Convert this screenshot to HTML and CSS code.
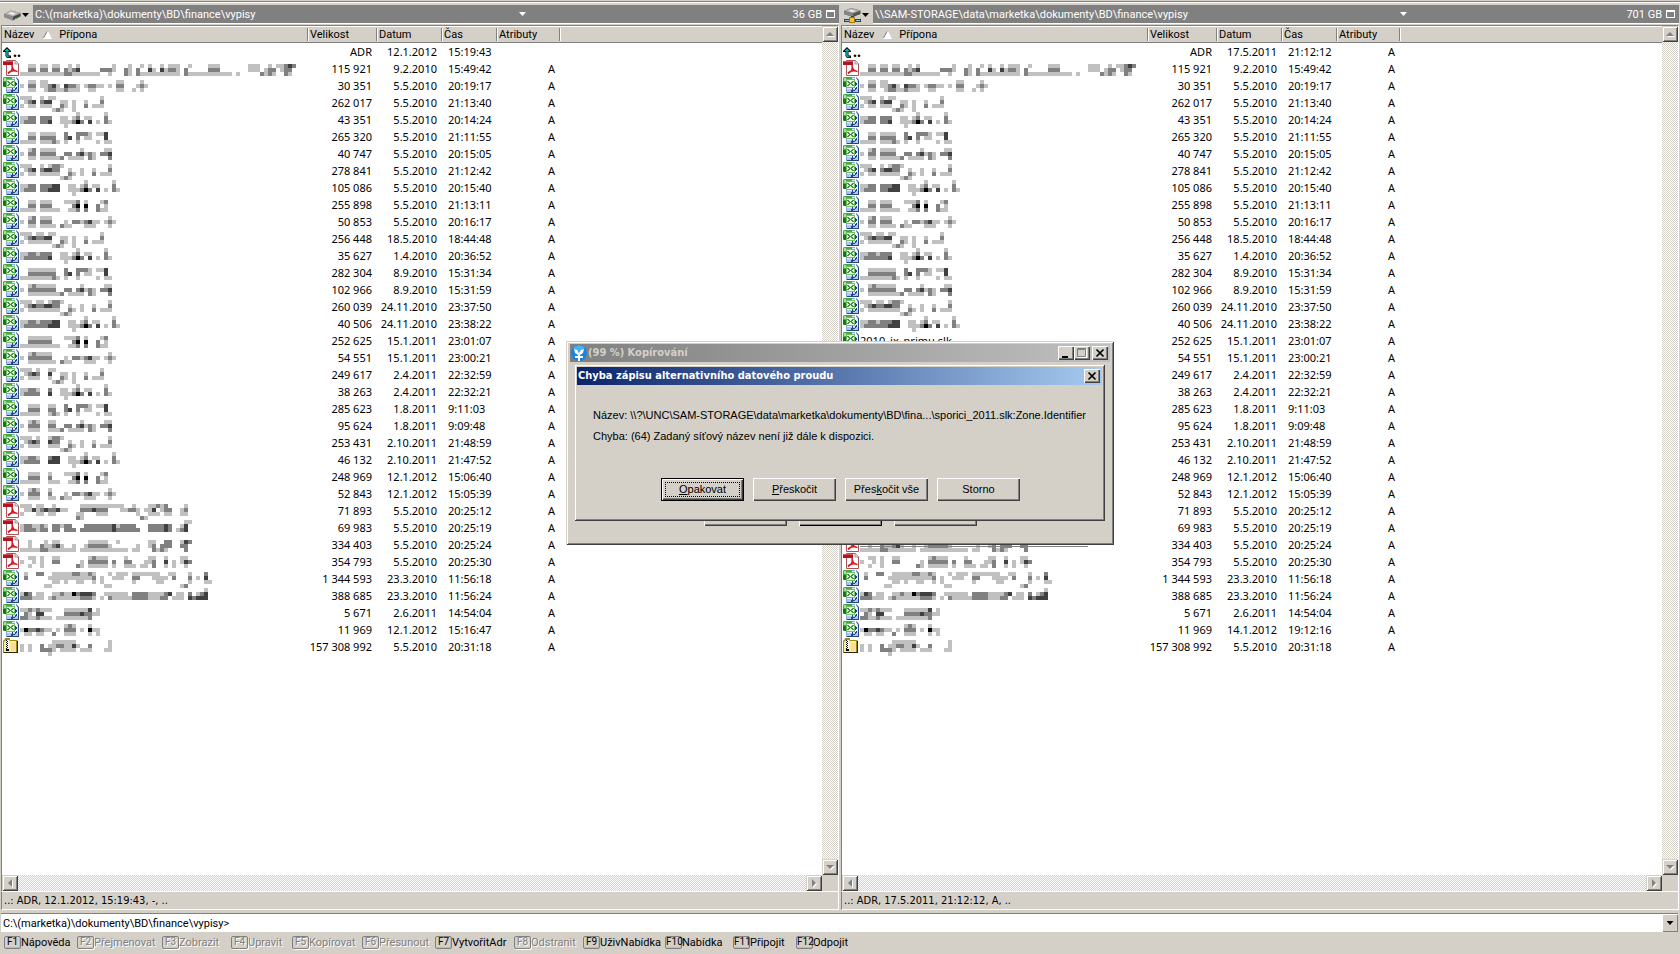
FILE: index.html
```html
<!DOCTYPE html>
<html lang="cs">
<head>
<meta charset="utf-8">
<title>C:\(marketka)\dokumenty\BD\finance\vypisy</title>
<link rel="stylesheet" href="styles.css">
</head>
<body>
<svg class="defs" aria-hidden="true">
  <symbol id="i-xls" viewBox="0 0 16 16">
    <path d="M3 0h10l3 3v13H3z" fill="#8aa8dc"/>
    <path d="M4 1h9l2 3v11H4z" fill="#dcebff"/>
    <path d="M4 12h11v3H4z" fill="#a9c8f5"/>
    <path d="M15 3h1v13H4v-1h11z" fill="#27467f"/>
    <path d="M12 0h1l3 3v1h-4z" fill="#fff"/><path d="M13 0l3 3v1h-1l-2-3z" fill="#3d5c98"/>
    <path d="M1 0h8v2H3v8H1L0 9V1z" fill="#3fae3f"/>
    <path d="M0 5h3v5H1L0 9z" fill="#0d7a12"/>
    <path d="M1 1h2v3H1z" fill="#a6e39a"/>
    <rect x="3" y="2" width="9" height="9" fill="#74bd66"/><rect x="4" y="3" width="7" height="7" fill="#effbe4"/>
    <path d="M4 4h2v1h1v1h1V5h1V4h2v1h-1v1H9v1h1v1h1v1H9V8H8V7H7v1H6v1H4V8h1V7h1V6H5V5H4z" fill="#3c9440"/>
    <path d="M12 5h1v1h1v2h-1v1h-1z" fill="#27467f"/>
    <path d="M13 10h1v2h-1v1h-1v-2h1zM8 13h4v1H9v1H8z" fill="#27467f"/><path d="M9 11h1v4H9z" fill="#27467f"/>
  </symbol>
  <symbol id="i-pdf" viewBox="0 0 16 16">
    <path d="M3.500.5h9l3 3v12h-12z" fill="#fff" stroke="#a8525a"/>
    <path d="M12 0v4h4" fill="#ddd" stroke="#888" stroke-width=".8"/>
    <path d="M0 1h10v4H0z" fill="#b5121d"/><path d="M0 1h10v1H0z" fill="#d9545a"/>
    <path d="M9 5c1 4-1 7-4 8.500M9.500 7c0 3 2 4 5 4.500M5 13c2-2.500 5-2.500 8-2" fill="none" stroke="#d4141e" stroke-width="1.500"/>
  </symbol>
  <symbol id="i-zip" viewBox="0 0 16 16">
    <path d="M0 3l2-2V0h5v2h7l1 1v11l-1 1H0z" fill="#9a8b14"/>
    <path d="M1 4l2-2h3l1 1h6v11H1z" fill="#f9f08c"/>
    <path d="M8 5h5v8H8z" fill="#fbd9a0"/><path d="M14 3h1v12H1v-1h13z" fill="#2c2804"/>
    <path d="M3 2h3v11H3z" fill="#fff"/><path d="M3 2h1v1h1v1H4v1h1v1H4v1h1v1H4v1h1v1H4v1h2v2H3v-3h1V9H3V8h1V7H3V6h1V5H3V4h1V3H3z" fill="#000"/>
  </symbol>
  <symbol id="i-up" viewBox="0 0 9 12">
    <path d="M0 5V4l4-4 4 4v1H5.500v3.500H8V11H4L2.500 9V5z" fill="#000"/>
    <path d="M1.500 4L4 1.500 6.500 4H4.700v4.500L5.500 9.500H7v.7H4.200L3.300 9V4z" fill="#00c4c4"/>
  </symbol>
  <symbol id="i-disk" viewBox="0 0 17 11">
    <path d="M0 4l7-3.500 9.500 2.500v3.500L9 10.500 0 7z" fill="#666"/>
    <path d="M0 4l7-3.500 9.500 2.500L9 6.500z" fill="#b5b5b5"/><path d="M4 3.500l3-1.500 5 1.500-3 1.500z" fill="#eee"/>
    <path d="M0 4l9 2.500V10.500L0 7z" fill="#8c8c8c"/><path d="M9 7l7.500-3v2L9 9.500z" fill="#444"/><path d="M11 8h2v1h-2z" fill="#5a5"/>
  </symbol>
  <symbol id="i-net" viewBox="0 0 17 15">
    <path d="M0 3l7-3 9.500 2.500v3.500L9 9 0 6z" fill="#555"/><path d="M0 3l7-3 9.500 2.500L9 5.500z" fill="#aaa"/><path d="M4 3l3-1.500 5 1.500-3 1z" fill="#eee"/>
    <path d="M0 3l9 2.500V9L0 6z" fill="#858585"/><path d="M7 8h3v3H7zM0 11h17v3H0z" fill="#3c3c3c"/><path d="M1 12h4v1H1zM12 12h4v1h-4z" fill="#8fc6dd"/>
    <path d="M5.500 9.500h5v5h-5z" fill="#f4c531" stroke="#a87400"/>
  </symbol>
</svg>

<div class="app">
  <div class="topline"></div>
  <main class="panes">
    <section class="pane" data-side="left">
      <div class="pathbar">
        <button class="drive" aria-label="Disk"><svg class="disk"><use href="#i-disk"/></svg><i class="tri"></i></button>
        <div class="path"><span class="where">C:\(marketka)\dokumenty\BD\finance\vypisy</span><i class="tri light"></i><span class="free">36 GB</span><i class="box"></i></div>
      </div>
    </section>
    <section class="pane" data-side="right">
      <div class="pathbar">
        <button class="drive" aria-label="Disk"><svg class="net"><use href="#i-net"/></svg><i class="tri"></i></button>
        <div class="path"><span class="where">\\SAM-STORAGE\data\marketka\dokumenty\BD\finance\vypisy</span><i class="tri light"></i><span class="free">701 GB</span><i class="box"></i></div>
      </div>
    </section>
  </main>
  <div class="cmd">
    <label for="cmd">C:\(marketka)\dokumenty\BD\finance\vypisy&gt;</label><input id="cmd" type="text">
    <button class="combo" aria-label="Historie"><i class="tri"></i></button>
  </div>
  <nav class="keys">
    <button><kbd>F1</kbd>Nápověda</button>
    <button disabled><kbd>F2</kbd>Přejmenovat</button>
    <button disabled><kbd>F3</kbd>Zobrazit</button>
    <button disabled><kbd>F4</kbd>Upravit</button>
    <button disabled><kbd>F5</kbd>Kopírovat</button>
    <button disabled><kbd>F6</kbd>Přesunout</button>
    <button><kbd>F7</kbd>VytvořitAdr</button>
    <button disabled><kbd>F8</kbd>Odstranit</button>
    <button><kbd>F9</kbd>UživNabídka</button>
    <button><kbd>F10</kbd>Nabídka</button>
    <button><kbd>F11</kbd>Připojit</button>
    <button><kbd>F12</kbd>Odpojit</button>
  </nav>
</div>

<div class="window progress">
  <header class="title inactive">
    <svg class="logo" viewBox="0 0 16 16"><circle cx="8" cy="8" r="8" fill="#1687dc"/><path d="M2 3a8 8 0 0 1 12 0L8 7z" fill="#46b4f3"/><path d="M3 4l3 1 2 3 2-3 3-1-1 4-3 2v1h3v2H9v3H7v-3H4v-2h3v-1L4 8z" fill="#fff"/></svg>
    <span class="caption">(99 %) Kopírování</span>
    <button class="wb" aria-label="Minimalizovat"><svg viewBox="0 0 12 10"><path d="M2 8h6v2H2z"/></svg></button>
    <button class="wb" aria-label="Maximalizovat"><svg viewBox="0 0 12 10"><path d="M2 1h9v9H2z" fill="#fff"/><path d="M1.500.5h8v8h-8zM1 1.500h9" fill="#d4d0c8" stroke="#808080"/></svg></button>
    <button class="wb last" aria-label="Zavřít"><svg viewBox="0 0 12 10"><path d="M2.500 1.500l7 7M9.500 1.500l-7 7" stroke="#000" stroke-width="1.700"/></svg></button>
  </header>
  <div class="behind"><i></i><i class="dark"></i><i></i></div>
  <div class="window error" role="dialog" aria-labelledby="err">
    <header class="title active">
      <span class="caption" id="err">Chyba zápisu alternativního datového proudu</span>
      <button class="wb" aria-label="Zavřít"><svg viewBox="0 0 12 10"><path d="M2.500 1.500l7 7M9.500 1.500l-7 7" stroke="#000" stroke-width="1.700"/></svg></button>
    </header>
    <p>Název: \\?\UNC\SAM-STORAGE\data\marketka\dokumenty\BD\fina...\sporici_2011.slk:Zone.Identifier</p>
    <p>Chyba: (64) Zadaný síťový název není již dále k dispozici.</p>
    <div class="actions">
      <button class="btn default"><span><u>O</u>pakovat</span></button>
      <button class="btn"><u>P</u>řeskočit</button>
      <button class="btn">Přes<u>k</u>očit vše</button>
      <button class="btn">Storno</button>
    </div>
  </div>
</div>
<script src="app.js"></script>
</body>
</html>
```
FILE: styles.css
```css
* { box-sizing: border-box; }
body {
  margin: 0;
  height: 100vh;
  overflow: hidden;
  background: #d4d0c8;
  color: #000;
  font: 11px/17px Roboto, sans-serif;
}
button { font: inherit; color: inherit; margin: 0; padding: 0; border: 0; background: #d4d0c8; }
.defs { position: absolute; width: 0; height: 0; }
.app { display: flex; flex-direction: column; height: 100vh; }
.topline { height: 5px; box-shadow: inset 0 1px #d4d0c8, inset 0 2px #808080, inset 0 3px #fff; flex: none; }
.panes { flex: 1; min-height: 0; display: grid; grid-template-columns: 1fr 1fr; }
.pane { display: flex; flex-direction: column; min-width: 0; padding-right: 1px; }

.pathbar { display: flex; height: 20px; flex: none; }
.drive { width: 33px; padding-left: 4px; display: flex; align-items: center; gap: 1px; }
.disk { width: 17px; height: 11px; }
.net { width: 17px; height: 15px; }
.tri { width: 7px; height: 4px; flex: none; background: #000; clip-path: polygon(0 0, 100% 0, 50% 100%); }
.tri.light { background: #fff; }
.path { flex: 1; display: flex; align-items: center; height: 18px; padding: 0 4px 0 2px; background: #808080; color: #fff; box-shadow: 0 1px #fff; }
.where { width: 484px; white-space: nowrap; }
[data-side="right"] .where { width: 525px; }
.free { margin-left: auto; }
.box { width: 9px; height: 8px; margin-left: 4px; border: 1px solid #fff; border-top-width: 2px; }

.body { flex: 1; min-height: 0; margin-left: 1px; border-left: 1px solid #808080; border-top: 1px solid #808080; border-right: 1px solid #fff; display: grid; grid-template: minmax(0, 1fr) 16px / minmax(0, 1fr) 16px; }
.list { background: #fff; overflow: hidden; }
table { width: 100%; border-collapse: collapse; table-layout: fixed; }
th { height: 17px; padding: 0; font-weight: normal; text-align: left; background: #d4d0c8; line-height: 15px; box-shadow: inset 0 1px #fff, inset 0 -1px #808080; }
th .sep { display: block; height: 13px; line-height: 13px; border-left: 1px solid #fff; box-shadow: -1px 0 #808080; padding-left: 1px; }
th .sort { display: flex; align-items: center; padding-left: 2px; }
.sort svg { width: 9px; height: 8px; margin: 0 7px 0 9px; }
.c-name { width: 306px; } .c-size { width: 69px; } .c-date { width: 65px; } .c-time { width: 55px; } .c-attr { width: 63px; }
td { height: 17px; padding: 0; text-align: right; white-space: nowrap; font-family: "Noto Sans", sans-serif; }
td:nth-child(2), td:nth-child(3), td:nth-child(5) { padding-right: 5px; }
td:nth-child(4) { text-align: left; padding-left: 6px; }
.name { display: flex; height: 17px; padding-left: 1px; gap: 1px; }
.icon { width: 16px; height: 16px; flex: none; }
.icon.up { width: 9px; height: 12px; margin-top: 4px; }
.dots { font-weight: bold; font-size: 14px; }
.mosaic { width: 280px; height: 17px; overflow: visible; flex: none; }
.track { background: repeating-conic-gradient(#fff 0 25%, #d4d0c8 0 50%) 0 0 / 2px 2px; display: flex; justify-content: space-between; }
.track.v { flex-direction: column; }
.sb { width: 16px; height: 16px; display: grid; place-items: center; box-shadow: inset 1px 1px #d4d0c8, inset -1px -1px #404040, inset 2px 2px #fff, inset -2px -2px #808080; }
.sb svg { width: 8px; height: 8px; }
.status { height: 19px; flex: none; margin-left: 1px; padding: 0 2px; border: 1px solid #fff; border-left-color: #808080; line-height: 17px; white-space: pre; font-family: "DejaVu Sans Condensed", "DejaVu Sans", sans-serif; }

.cmd { display: flex; flex: none; height: 19px; margin: 3px 2px 0 1px; padding-left: 2px; background: #fff; border-top: 1px solid #808080; align-items: center; }
.cmd input { flex: 1; border: 0; outline: 0; padding: 0; height: 16px; font: inherit; background: none; }
.combo { width: 16px; height: 18px; display: grid; place-items: center; box-shadow: inset 1px 1px #fff, inset -1px -1px #808080; }

.keys { height: 22px; flex: none; display: grid; padding: 0 4px 2px; align-items: center; grid-template-columns: 73px 85px 69px 61px 70px 73px 79px 69px 82px 68px 63px 68px; }
.keys button { display: flex; align-items: center; justify-content: flex-start; height: 16px; white-space: nowrap; }
kbd { width: 17px; height: 13px; border: 1px solid #808080; border-radius: 2px; font: 10px/10px Roboto, sans-serif; text-align: center; box-shadow: inset -1px -1px #bbb; white-space: nowrap; }
.keys button:disabled { color: #808080; text-shadow: 1px 1px #fff; }
.keys button:disabled kbd { box-shadow: 1px 1px #fff; }

.window { position: absolute; background: #d4d0c8; box-shadow: inset 1px 1px #d4d0c8, inset -1px -1px #404040, inset 2px 2px #fff, inset -2px -2px #808080; }
.progress { left: 566px; top: 341px; width: 548px; height: 204px; padding: 3px 4px; }
.error { left: 8px; top: 23px; width: 531px; height: 157px; padding: 3px; font-family: "Liberation Sans", sans-serif; }
.title { display: flex; align-items: center; height: 18px; padding-right: 2px; font: bold 11px/18px "DejaVu Sans Condensed", "DejaVu Sans", sans-serif; }
.inactive { background: linear-gradient(90deg, #808080, #c0c0c0); color: #d4d0c8; padding-left: 1px; }
.active { background: linear-gradient(90deg, #0a246a, #a6caf0); color: #fff; padding-left: 1px; }
.logo { width: 16px; height: 16px; margin-right: 1px; }
.caption { flex: 1; white-space: nowrap; }
.wb { width: 16px; height: 14px; display: grid; place-items: center; box-shadow: inset 1px 1px #fff, inset -1px -1px #404040, inset -2px -2px #808080; }
.wb.last { margin-left: 2px; }
.wb svg { width: 12px; height: 10px; }
.error p { margin: 0 13px 0 16px; line-height: 21px; white-space: nowrap; }
.error .title + p { margin-top: 20px; }
.actions { display: flex; gap: 9px; margin: 31px 0 0 84px; }
.btn { width: 83px; height: 23px; box-shadow: inset 1px 1px #fff, inset -1px -1px #404040, inset -2px -2px #808080; }
.btn.default { border: 1px solid #000; }
.btn.default span { display: block; height: 15px; line-height: 13px; margin: 0 3px; border: 1px dotted #000; }
.behind { display: flex; gap: 12px; margin: 159px 0 0 134px; }
.behind i { width: 83px; height: 5px; box-shadow: inset 1px 0 #fff, inset -1px -1px #404040, inset -2px -2px #808080; }
.behind .dark { box-shadow: inset 1px 0 #fff, inset -1px -1px #000, inset -2px -2px #808080; }
```
FILE: app.js
```javascript
// type, size, date, time
const files = `up|ADR|12.1.2012|15:19:43
pdf|115 921|9.2.2010|15:49:42
xls|30 351|5.5.2010|20:19:17
xls|262 017|5.5.2010|21:13:40
xls|43 351|5.5.2010|20:14:24
xls|265 320|5.5.2010|21:11:55
xls|40 747|5.5.2010|20:15:05
xls|278 841|5.5.2010|21:12:42
xls|105 086|5.5.2010|20:15:40
xls|255 898|5.5.2010|21:13:11
xls|50 853|5.5.2010|20:16:17
xls|256 448|18.5.2010|18:44:48
xls|35 627|1.4.2010|20:36:52
xls|282 304|8.9.2010|15:31:34
xls|102 966|8.9.2010|15:31:59
xls|260 039|24.11.2010|23:37:50
xls|40 506|24.11.2010|23:38:22
xls|252 625|15.1.2011|23:01:07
xls|54 551|15.1.2011|23:00:21
xls|249 617|2.4.2011|22:32:59
xls|38 263|2.4.2011|22:32:21
xls|285 623|1.8.2011|9:11:03
xls|95 624|1.8.2011|9:09:48
xls|253 431|2.10.2011|21:48:59
xls|46 132|2.10.2011|21:47:52
xls|248 969|12.1.2012|15:06:40
xls|52 843|12.1.2012|15:05:39
pdf|71 893|5.5.2010|20:25:12
pdf|69 983|5.5.2010|20:25:19
pdf|334 403|5.5.2010|20:25:24
pdf|354 793|5.5.2010|20:25:30
xls|1 344 593|23.3.2010|11:56:18
xls|388 685|23.3.2010|11:56:24
xls|5 671|2.6.2011|14:54:04
xls|11 969|12.1.2012|15:16:47
zip|157 308 992|5.5.2010|20:31:18`.split('\n').map(l => l.split('|'));

const rightChanges = { 0: ['up', 'ADR', '17.5.2011', '21:12:12'], 34: ['xls', '11 969', '14.1.2012', '19:12:16'] };

// Masked names: each line is a list of "from-to:shade" runs on a 4px cell grid.
const cycle = [
  ['0-2:1 4-5:1 7-8:1 20:1', '1:1 2:2 3:3 4-5:2 6-7:3 10:1 11:1 13:1 16:1 20:2', '0:1 2-7:1 10:2 11:1 13:1 16:2 18-20:1', '8:1 9:2 10:1 13:1'],
  ['14:1 21:1', '0-1:1 2-3:2 4:1 5-6:2 7:2 10-11:1 13:1 14:2 16-17:1 21:2', '0:1 1-6:2 7:3 10-12:1 13:2 14:4 15:2 17:3 19:1 21:2 22:1', '11:1'],
  ['2-8:1 11:2 14-16:2 17:1 19-20:1 21:3', '2-8:2 11:2 12:3 14:2 16-17:1 21:3', '0-7:1 8:2 9:1 11:1 14:1 19:1 21-22:1'],
  ['2:1 3:2 4-8:1 15:1 21-22:1', '0:1 2-8:2 11-12:2 14:2 15:3 16:1 17:2 18:1 20-21:2 22:3', '2-9:1 10:2 12-15:1 17:2 18:1 22:2'],
  ['0-2:1 4-5:1 7:1 8-9:2 10:1 22:1', '1:1 2:2 3:3 4-5:2 6-7:3 8-9:2 12:1 15:1 18:1 22:2', '0:1 2-9:1 12:2 13:1 15:1 18:2 20-22:1', '10:1 11:2 12:1'],
  ['16:1 23:1', '0-1:1 2-3:2 4:1 5-7:2 8-9:3 12-13:1 15:1 16:2 18-19:1 23:2', '0:1 1-6:2 7-9:3 12-14:1 15:2 16:4 17:2 19:3 21:1 23:2 24:1', '13:1'],
  ['2-7:1 11-13:1 14:2 16:1 20:1 21:2', '2-7:2 13:2 14:4 16:4 19:2 21:1', '0-9:1 12-13:1 14:2 16:2 19:2 20-21:1'],
  ['2:1 3:2 4-7:1 22:1', '0:1 2-7:2 11:1 13-14:2 15:1 16:2 17:3 18-19:1 21:1 22:2 23:1', '2-8:1 10:2 11-12:1 16-18:1 22:1']
];
const special = {
  1: ['2-3:1 5-6:1 8-9:1 12:1 14:1 23:1 27:1 30:1 32:1 35:1 37-39:1 42:1 47-49:1 57-59:1 62:1 64-65:1 66:2 67:3 68:2', '2-3:2 5-6:2 8-9:2 11:2 12:1 13:2 14:3 20-21:2 22:2 23:1 26:2 27:1 29:2 32:3 33:1 35:3 36:1 37-38:2 39:1 41:2 47-49:2 57-59:1 61:1 62:2 63:2 65:1 66:2 67:2', '0-10:1 11-12:2 13-19:1 22:1 26:2 27:1 29:2 30-39:1 41:2 42-52:1 54:1 60:2 61:1 62:2 63:1 66:2 67:1'],
  2: ['2-3:1 5-6:1 24-25:1 30:1', '0:1 2-3:2 5-6:1 7:2 8:3 9:1 11:3 12-13:2 14:1 16:1 17-18:2 19-20:1 22:1 24-25:2 29:1 30:2 31:1', '2-3:1 6:1 7-8:2 9-10:1 11:2 12-14:1 17-18:1 24-25:1 28:1 30:1'],
  27: ['0-2:1 4-5:1 8:1 15-25:1 28:1 32-33:1 34:2 35:1 36:2 41:1', '1-2:1 3:3 4:1 5:2 6:3 7-8:2 9:3 10-11:1 15-17:2 18:3 19-21:2 25-26:1 27-28:2 29:1 31-32:1 33:3 35:1 36-37:2 40:1 41:2', '0:1 4-5:1 7-8:1 14-15:1 19-21:1 29:1 32-34:1 36-37:1 40-41:1', '14:2 15:1 30:2 31:1'],
  28: ['41-42:1', '0:1 1-2:2 3-4:1 5:2 6:1 8-9:2 10:1 11-12:2 16-22:2 23:3 24:1 25-28:2 32-35:2 36:3 37:2 40:1 41:3', '0:1 1-3:2 4:1 5-6:2 8-9:2 11-13:2 15-22:2 23:3 24-29:2 32-35:2 36:3 37:2 39:1 40:2 41:3'],
  29: ['2:1 6:1 8-9:1 17-21:1 24:1 32-33:1 36-37:2 40:1 41:3 42:2', '2:1 5:2 6-7:1 8:2 9:3 10:1 13:1 16:1 17-21:2 22:1 29:1 32:1 33:2 35:2 36-37:2 40-41:2', '0-4:1 5-6:2 7-13:1 15-26:1 28-29:1 33:2 34:1 35:2 36:1 41:2'],
  30: ['2-3:1 5:1 8-9:1 17:1 18:2 19-21:1 26:1 32-33:1 36:1 40-41:1', '0:1 3:1 5:1 8-9:2 15:1 17-21:2 23:2 26-27:2 31:1 32:1 33:2 36:3 38:1 40:1 41:3 42:2', '2:1 5:1 14:2 15:1 17-21:1 23:1 26-28:1 30-31:1 33:2 36:1 38:1 41:1'],
  31: ['1:1 4-5:2 8-12:1 13-14:2 15-16:1 17:2 18:1 22:1 24-26:1 28-34:1 37-38:1 42:1 46:2', '1:2 7-17:1 18:2 20:1 23-25:1 28-29:2 33-36:1 38:2 42:2 44:1 46:3', '8-9:1 11:1 14-15:1 18:1 20:1 28:1 34-35:1 42:1 46-47:1', '6-7:1 21-22:1 40:1 41:2'],
  32: ['46:1', '0:1 1:3 2:2 4-5:1 8-9:1 10:2 11-12:1 13:4 14:2 15-17:3 18:2 21-26:1 28-31:2 32-35:1 36:2 37:3 39-40:1 42:2 44:1 45:2 46:3', '0:2 1-2:2 3-5:1 7:1 8:2 9-14:1 15-17:2 18:1 20:1 22:2 23-27:1 28-31:2 32-34:1 35-36:2 38-40:1 42:3 43:2 44-46:3'],
  33: ['0-1:1 2:2 3:1 4:2 5-7:1 11-16:1 17:3 19:1', '1:2 2:1 4:3 5:3 11-14:2 15:3 16:2 17:2 18-19:1', '0-1:2 2-3:1 4:2 5-7:1 9-16:1 17:2'],
  34: ['11:1 12:2 13:1 17:1', '0:1 1:4 2-3:2 4:3 5:2 6-7:1 9:1 11-13:2 15:1 17:4 18-19:1', '1-2:1 4-5:1 8:2 11-13:1 17:1 19:1'],
  35: ['8-13:1 22:1', '0:1 2:1 5:2 7-8:1 9-10:2 11:1 12:1 13:3 14:1 17:2 22:1', '0:1 2:1 5-6:2 7:2 8:1 10-13:1 15-17:1 21-22:1', '7:1']
};
const shades = { 1: '#c0c0c0', 2: '#808080', 3: '#404040', 4: '#000' };

function mosaic(k, underline) {
  const lines = special[k] || cycle[(k - 3) % 8];
  const top = 4 - (k - 1) % 4;
  const gap = special[k] ? [] : k < 11 ? [4] : k < 19 ? [] : [5, 6];
  const paths = {};
  lines.forEach((line, row) => line.split(' ').forEach(run => {
    const [range, shade] = run.split(':');
    const [from, to = from] = range.split('-').map(Number);
    for (let c = from; c <= to; c++)
      if (!gap.includes(c)) paths[shade] = (paths[shade] || '') + `M${c * 4} ${top + row * 4}h4v4h-4z`;
  }));
  if (underline) paths[2] += 'M0 10h228v1H0z';
  return `<svg class="mosaic" shape-rendering="crispEdges" aria-hidden="true">${Object.keys(paths).map(s => `<path fill="${shades[s]}" d="${paths[s]}"/>`).join('')}</svg>`;
}

function arrow(d) {
  const p = { up: 'M0 6L4 2l4 4z', down: 'M0 2l4 4 4-4z', left: 'M6 0L2 4l4 4z', right: 'M2 0l4 4-4 4z' }[d];
  return `<button class="sb" aria-label="${d}"><svg viewBox="0 0 8 8" overflow="visible"><path d="${p}" fill="#fff" transform="translate(1 1)"/><path d="${p}" fill="#808080"/></svg></button>`;
}

document.querySelectorAll('.pane').forEach(pane => {
  const right = pane.dataset.side === 'right';
  const rows = files.map((f, k) => {
    const [type, size, date, time] = right && rightChanges[k] || f;
    const name = type === 'up'
      ? '<svg class="icon up"><use href="#i-up"/></svg><span class="dots">..</span>'
      : `<svg class="icon"><use href="#i-${type}"/></svg>${right && k === 17 ? '<span>2010_ix_primu.slk</span>' : mosaic(k, right && k === 29)}`;
    return `<tr><td><div class="name">${name}</div></td><td>${size}</td><td>${date}</td><td>${time}</td><td>${k || right ? 'A' : ''}</td><td></td></tr>`;
  }).join('');
  pane.insertAdjacentHTML('beforeend', `<div class="body"><div class="list"><table>
    <colgroup><col class="c-name"><col class="c-size"><col class="c-date"><col class="c-time"><col class="c-attr"><col></colgroup>
    <thead><tr><th><span class="sort">Název<svg viewBox="0 0 9 8"><path d="M0 8h9L5 0" fill="#fff"/><path d="M.5 7L4 .5" stroke="#808080"/></svg>Přípona</span></th>
    <th><span class="sep">Velikost</span></th><th><span class="sep">Datum</span></th><th><span class="sep">Čas</span></th><th><span class="sep">Atributy</span></th><th><span class="sep"></span></th></tr></thead>
    <tbody>${rows}</tbody></table></div>
    <div class="track v">${arrow('up')}${arrow('down')}</div><div class="track">${arrow('left')}${arrow('right')}</div><div></div></div>
    <div class="status">${right ? '..: ADR, 17.5.2011, 21:12:12, A, ..' : '..: ADR, 12.1.2012, 15:19:43, -, ..'}</div>`);
});
```
